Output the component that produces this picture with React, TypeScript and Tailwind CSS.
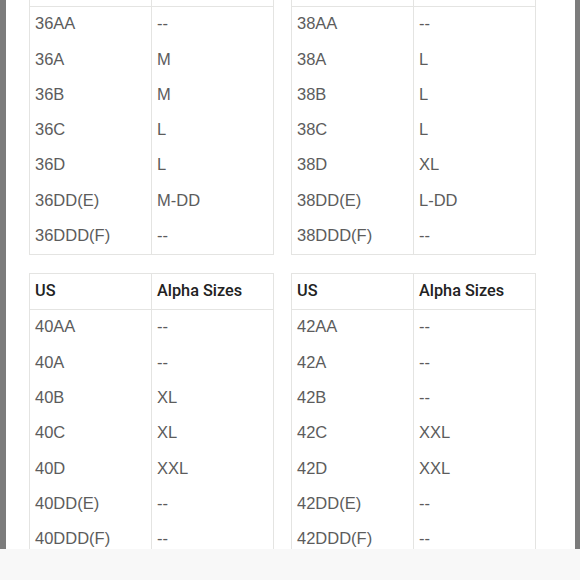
const tableA = [
  ['36AA', '--'],
  ['36A', 'M'],
  ['36B', 'M'],
  ['36C', 'L'],
  ['36D', 'L'],
  ['36DD(E)', 'M-DD'],
  ['36DDD(F)', '--'],
];
const tableB = [
  ['38AA', '--'],
  ['38A', 'L'],
  ['38B', 'L'],
  ['38C', 'L'],
  ['38D', 'XL'],
  ['38DD(E)', 'L-DD'],
  ['38DDD(F)', '--'],
];
const tableC = [
  ['40AA', '--'],
  ['40A', '--'],
  ['40B', 'XL'],
  ['40C', 'XL'],
  ['40D', 'XXL'],
  ['40DD(E)', '--'],
  ['40DDD(F)', '--'],
];
const tableD = [
  ['42AA', '--'],
  ['42A', '--'],
  ['42B', '--'],
  ['42C', 'XXL'],
  ['42D', 'XXL'],
  ['42DD(E)', '--'],
  ['42DDD(F)', '--'],
];

// top pair is scrolled so only the header's bottom edge peeks in
function SizeTable({ rows, scrolled }: { rows: string[][]; scrolled?: boolean }) {
  return (
    <div className={`w-[245px] border border-[#e4e4e2] bg-white ${scrolled ? 'border-t-0' : ''}`}>
      {scrolled ? (
        <div className="flex h-[7px] border-b border-[#e4e4e2]">
          <div className="w-[122px] border-r border-[#e4e4e2]" />
        </div>
      ) : (
        <div
          className="flex h-[36px] border-b border-[#e4e4e2] text-[#222] font-medium text-[16.3px]"
          style={{ fontFamily: 'Roboto, sans-serif' }}
        >
          <div className="w-[122px] flex items-center pl-[5px] border-r border-[#e4e4e2]">US</div>
          <div className="flex-1 flex items-center pl-[5px]">Alpha Sizes</div>
        </div>
      )}
      {rows.map(([us, alpha]) => (
        <div key={us} className="flex h-[35.3px] text-[#5c5c5c]">
          <div className="w-[122px] flex items-center pl-[5px] pb-[2px] border-r border-[#e4e4e2]">{us}</div>
          <div className="flex-1 flex items-center pl-[5px] pb-[2px]">{alpha}</div>
        </div>
      ))}
    </div>
  );
}

export default function App() {
  return (
    <div
      className="w-[580px] h-[580px] overflow-hidden flex flex-col bg-white text-[16.5px]"
      style={{ fontFamily: '"Liberation Sans", Arial, sans-serif' }}
    >
      <div className="flex h-[549px] overflow-hidden">
        <div className="w-[6px] bg-[#7c7c7c]" />
        <div className="flex-1 overflow-hidden pl-[23px]">
          <div className="grid grid-cols-[245px_245px] gap-x-[17px] gap-y-[18px]">
            <SizeTable rows={tableA} scrolled />
            <SizeTable rows={tableB} scrolled />
            <SizeTable rows={tableC} />
            <SizeTable rows={tableD} />
          </div>
        </div>
        <div className="w-[5px] bg-[#7c7c7c]" />
      </div>
      <div className="flex-1 bg-[#f8f8f8]" />
    </div>
  );
}
